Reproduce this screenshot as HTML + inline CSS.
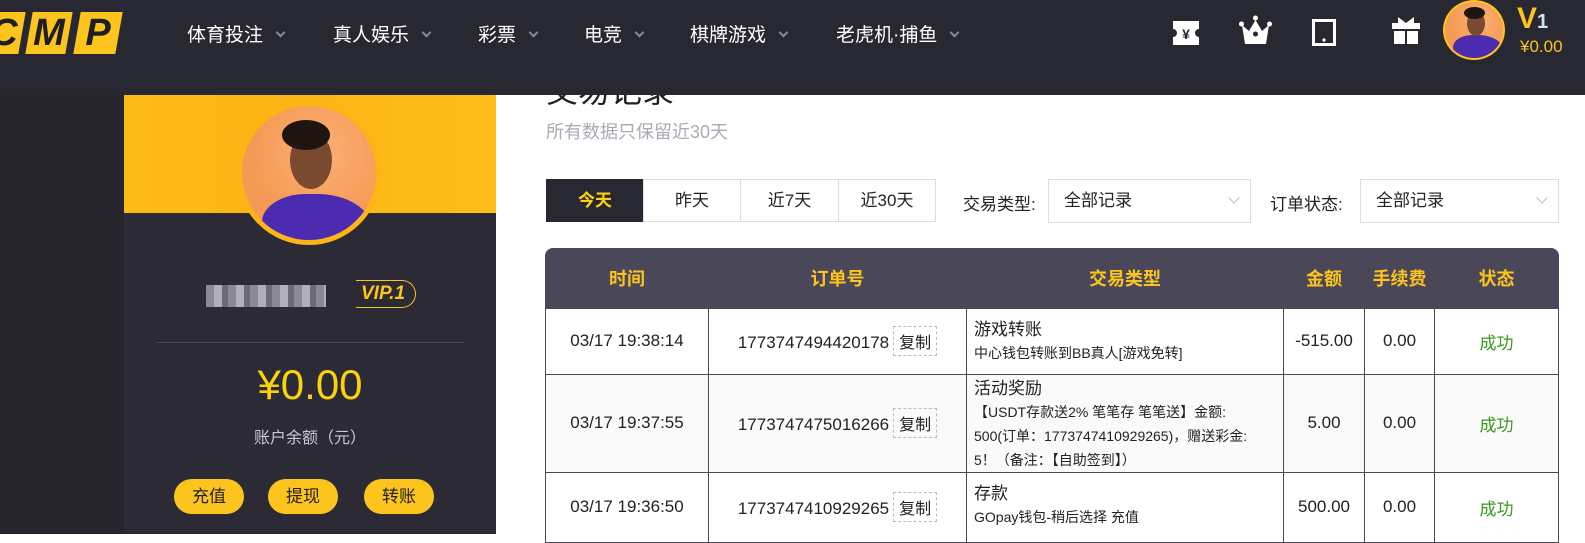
<!DOCTYPE html>
<html><head><meta charset="utf-8"><style>
*{margin:0;padding:0;box-sizing:border-box}
body{width:1585px;height:534px;overflow:hidden;background:#fff;font-family:"Liberation Sans","Noto Sans CJK SC",sans-serif;position:relative}
.left{position:absolute;left:0;top:95px;width:124px;height:439px;background:#26252e}
.side{position:absolute;left:124px;top:95px;width:372px;height:439px;background:#2b2a35}
.banner{position:absolute;left:0;top:0;width:372px;height:118px;background:linear-gradient(90deg,#fdbb18,#fcb514 40%,#fdbd1a)}
.nav{position:absolute;left:0;top:0;width:1585px;height:95px;background:#282832}
.logo{position:absolute;top:12px;height:42px;background:#fcc41c;transform:skewX(-10deg)}
.logo span{display:block;transform:skewX(10deg);font:italic 900 38px/42px "Liberation Sans",sans-serif;color:#1e1e24;text-align:center}
.ni{position:absolute;top:20px;color:#fff;font-size:19px}
.ni i{display:inline-block;width:7px;height:7px;border-right:2.5px solid #8a8a96;border-bottom:2.5px solid #8a8a96;transform:rotate(45deg);margin-left:14px;position:relative;top:-5px}
.av{position:absolute;border-radius:50%;background:radial-gradient(circle at 60% 35%,#fbb074,#f59a55 60%);overflow:hidden}
.av .body{position:absolute;background:#4b2bb0;border-radius:40% 50% 0 0}
.av .head{position:absolute;background:#7a4a30;border-radius:50%}
.av .hair{position:absolute;background:#1e1510;border-radius:50%}
.tbl{position:absolute;left:545px;top:248px;width:1014px;border-collapse:collapse;font-size:17px;color:#222}
.tbl th{color:#fcc41c;font-weight:bold;height:60px;font-size:18px}
.tbl td{border:1px solid #4a4858;text-align:center}
.tbl td.t{text-align:left;padding-left:7px;font-size:17px;line-height:22px;vertical-align:top;padding-top:10px}
.tbl td.t small{font-size:14px;line-height:24px;display:block}
.cp{display:inline-block;border:1px dashed #bbb;font-size:16px;padding:2px 5px;margin-left:4px}
.ok{color:#3a9a1c}
.tab{position:absolute;top:179px;height:43px;border:1px solid #ddd;font-size:17px;line-height:41px;text-align:center;color:#222}
.sel{position:absolute;top:179px;height:44px;border:1px solid #ddd;font-size:17px;line-height:42px;padding-left:15px;color:#222}
.sel i{position:absolute;right:12px;top:14px;width:8px;height:8px;border-right:1.5px solid #bbb;border-bottom:1.5px solid #bbb;transform:rotate(45deg)}
.btn{position:absolute;top:479px;height:35px;border-radius:18px;background:#fcc41c;color:#222;font-size:17px;line-height:35px;text-align:center;width:70px}
</style></head><body>
<div style="position:absolute;left:546px;top:66px;font-size:32px;color:#222">交易记录</div>
<div class="left"></div>
<div class="side">
 <div class="banner"></div>
 <div class="av" style="left:113px;top:6px;width:144px;height:144px;border:5px solid #fcb514">
  <div class="body" style="left:20px;top:88px;width:110px;height:70px"></div>
  <div class="head" style="left:48px;top:25px;width:42px;height:58px"></div>
  <div class="hair" style="left:40px;top:14px;width:48px;height:30px"></div>
 </div>
 <div style="position:absolute;left:82px;top:190px;width:120px;height:22px;background:repeating-linear-gradient(90deg,#9a9aa6 0 8px,#c6c8d0 8px 16px,#777684 16px 22px);opacity:.85"></div>
 <div style="position:absolute;left:232px;top:185px;width:60px;height:28px;border:1.5px solid #fcc41c;border-left:none;border-radius:0 14px 14px 0;color:#fcc41c;font:italic bold 19px/25px 'Liberation Sans',sans-serif;padding-left:5px">VIP.1</div>
 <div style="position:absolute;left:32px;top:247px;width:309px;height:1px;background:#474756"></div>
 <div style="position:absolute;left:0;top:266px;width:372px;text-align:center;color:#fcd20c;font-size:42px">¥0.00</div>
 <div style="position:absolute;left:0;top:329px;width:372px;text-align:center;color:#c7c9d2;font-size:16px">账户余额（元）</div>
</div>
<div class="btn" style="left:174px">充值</div>
<div class="btn" style="left:268px">提现</div>
<div class="btn" style="left:364px">转账</div>

<div class="nav">
 <div class="logo" style="left:-14px;width:36px"><span>C</span></div>
 <div class="logo" style="left:29px;width:40px"><span>M</span></div>
 <div class="logo" style="left:77px;width:42px"><span>P</span></div>
 <div class="ni" style="left:187px">体育投注<i></i></div>
 <div class="ni" style="left:333px">真人娱乐<i></i></div>
 <div class="ni" style="left:478px">彩票<i></i></div>
 <div class="ni" style="left:584px">电竞<i></i></div>
 <div class="ni" style="left:690px">棋牌游戏<i></i></div>
 <div class="ni" style="left:836px">老虎机·捕鱼<i></i></div>
 <svg style="position:absolute;left:1172px;top:19px" width="28" height="28" viewBox="0 0 28 28"><path d="M1 2h26v8a4 4 0 0 0 0 8v8H1v-8a4 4 0 0 0 0-8z" fill="#fff"/><text x="14" y="20" font-size="14" font-weight="bold" text-anchor="middle" fill="#282832">¥</text></svg>
 <svg style="position:absolute;left:1239px;top:15px" width="33" height="30" viewBox="0 0 33 30"><circle cx="16.5" cy="3" r="2.5" fill="#fff"/><circle cx="2.5" cy="9" r="2.5" fill="#fff"/><circle cx="30.5" cy="9" r="2.5" fill="#fff"/><path d="M3 10l7 6 6.5-11 6.5 11 7-6-3 19H6z" fill="#fff"/><circle cx="16.5" cy="19" r="2.5" fill="#282832"/></svg>
 <svg style="position:absolute;left:1312px;top:19px" width="24" height="27" viewBox="0 0 24 27"><rect x="1.5" y="1.5" width="21" height="24" fill="none" stroke="#fff" stroke-width="3"/><circle cx="12" cy="21" r="1.6" fill="#fff"/></svg>
 <svg style="position:absolute;left:1392px;top:15px" width="28" height="30" viewBox="0 0 28 30"><path d="M6 2l8 6 8-6v6h6v6H0V8h6z" fill="#fff"/><rect x="2" y="16" width="11" height="13" fill="#fff"/><rect x="15" y="16" width="11" height="13" fill="#fff"/></svg>
 <div class="av" style="left:1443px;top:0;width:62px;height:60px;border:2px solid #fcc41c">
  <div class="body" style="left:8px;top:33px;width:50px;height:30px"></div>
  <div class="head" style="left:22px;top:9px;width:18px;height:25px"></div>
  <div class="hair" style="left:19px;top:5px;width:21px;height:12px"></div>
 </div>
 <div style="position:absolute;left:1517px;top:2px;color:#fcc41c;font:bold 30px/34px 'Liberation Sans',sans-serif">V<span style="color:#cfe6f6;font-size:20px">1</span></div>
 <div style="position:absolute;left:1520px;top:37px;color:#fcc41c;font-size:17px">¥0.00</div>
</div>

<div style="position:absolute;left:546px;top:118px;color:#a9aab4;font-size:18px">所有数据只保留近30天</div>

<div class="tab" style="left:546px;width:98px;background:#282832;color:#fcd20c;font-weight:bold;border-color:#282832">今天</div>
<div class="tab" style="left:643px;width:98px">昨天</div>
<div class="tab" style="left:740px;width:99px">近7天</div>
<div class="tab" style="left:838px;width:98px">近30天</div>
<div style="position:absolute;left:963px;top:190px;font-size:17px;color:#222">交易类型:</div>
<div class="sel" style="left:1048px;width:203px">全部记录<i></i></div>
<div style="position:absolute;left:1270px;top:190px;font-size:17px;color:#222">订单状态:</div>
<div class="sel" style="left:1360px;width:199px">全部记录<i></i></div>

<div style="position:absolute;left:545px;top:248px;width:1014px;height:60px;background:#4a4858;border-radius:8px 8px 0 0"></div>
<table class="tbl">
<tr><th style="width:163px">时间</th><th style="width:258px">订单号</th><th style="width:317px">交易类型</th><th style="width:81px">金额</th><th style="width:70px">手续费</th><th>状态</th></tr>
<tr style="height:66px"><td>03/17 19:38:14</td><td>1773747494420178<span class="cp">复制</span></td><td class="t">游戏转账<small>中心钱包转账到BB真人[游戏免转]</small></td><td>-515.00</td><td>0.00</td><td class="ok">成功</td></tr>
<tr style="height:93px;background:#fafafa"><td>03/17 19:37:55</td><td>1773747475016266<span class="cp">复制</span></td><td class="t" style="padding-top:3px">活动奖励<small>【USDT存款送2% 笔笔存 笔笔送】金额:<br>500(订单：1773747410929265)，赠送彩金:<br>5！（备注：【自助签到】）</small></td><td>5.00</td><td>0.00</td><td class="ok">成功</td></tr>
<tr style="height:70px"><td>03/17 19:36:50</td><td>1773747410929265<span class="cp">复制</span></td><td class="t">存款<small>GOpay钱包-稍后选择 充值</small></td><td>500.00</td><td>0.00</td><td class="ok">成功</td></tr>
</table>
</body></html>
